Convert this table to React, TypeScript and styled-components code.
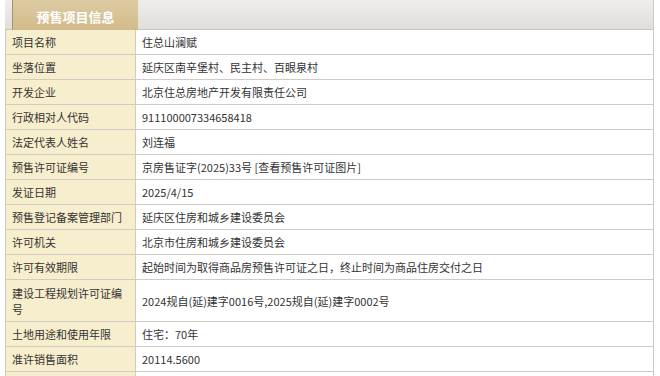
import React from "react";
import styled, { createGlobalStyle } from "styled-components";

const Global = createGlobalStyle`
  html, body { margin: 0; padding: 0; background: #fff; }
  body { font-family: "PingFang SC", "Noto Sans CJK SC", "Liberation Sans", sans-serif; }
`;

const Page = styled.div`
  width: 660px;
  height: 376px;
  overflow: hidden;
  background: #fff;
  padding: 0 6px 0 5px;
  box-sizing: border-box;
`;

const HeaderBar = styled.div`
  height: 30px;
  box-sizing: border-box;
  display: flex;
  align-items: flex-end;
  padding-left: 7px;
  background: linear-gradient(#efeeeb, #e0deda);
  border-bottom: 1px solid #c9c6c0;
  border-right: 1px solid #cfcdc8;
`;

const Tab = styled.div`
  width: 126px;
  height: 30px;
  box-sizing: border-box;
  display: flex;
  align-items: center;
  justify-content: center;
  padding-top: 2px;
  color: #fff;
  font-size: 13px;
  font-weight: bold;
  background: linear-gradient(#ddcba3, #d2bb8b);
  border-left: 1px solid #a89266;
  margin-bottom: -1px;
`;

const Table = styled.div`
  display: grid;
  grid-template-columns: 130px 1fr;
  border-left: 1px solid #cfcac0;
  border-right: 1px solid #cfcac0;
`;

const Label = styled.div<{ $tall?: boolean }>`
  background: #f7eecd;
  color: #333;
  font-size: 11px;
  line-height: 16px;
  padding: 4px 6px 4px 6px;
  border-bottom: 1px solid #d0ccc4;
  border-right: 1px solid #d0ccc4;
  display: flex;
  align-items: center;
  height: ${(p) => (p.$tall ? "33px" : "16px")};
`;

const Value = styled.div`
  background: #fff;
  color: #333;
  font-size: 11px;
  line-height: 16px;
  padding: 4px 6px;
  border-bottom: 1px solid #d0ccc4;
  display: flex;
  align-items: center;
`;

const rows: [string, string, boolean?][] = [
  ["项目名称", "住总山澜赋"],
  ["坐落位置", "延庆区南辛堡村、民主村、百眼泉村"],
  ["开发企业", "北京住总房地产开发有限责任公司"],
  ["行政相对人代码", "911100007334658418"],
  ["法定代表人姓名", "刘连福"],
  ["预售许可证编号", "京房售证字(2025)33号 [查看预售许可证图片]"],
  ["发证日期", "2025/4/15"],
  ["预售登记备案管理部门", "延庆区住房和城乡建设委员会"],
  ["许可机关", "北京市住房和城乡建设委员会"],
  ["许可有效期限", "起始时间为取得商品房预售许可证之日，终止时间为商品住房交付之日"],
  ["建设工程规划许可证编号", "2024规自(延)建字0016号,2025规自(延)建字0002号", true],
  ["土地用途和使用年限", "住宅：70年"],
  ["准许销售面积", "20114.5600"],
  ["", ""],
];

export default function App() {
  return (
    <Page>
      <Global />
      <HeaderBar>
        <Tab>预售项目信息</Tab>
      </HeaderBar>
      <Table>
        {rows.map(([k, v, tall], i) => (
          <React.Fragment key={i}>
            <Label $tall={tall}>{k}</Label>
            <Value>{v}</Value>
          </React.Fragment>
        ))}
      </Table>
    </Page>
  );
}
